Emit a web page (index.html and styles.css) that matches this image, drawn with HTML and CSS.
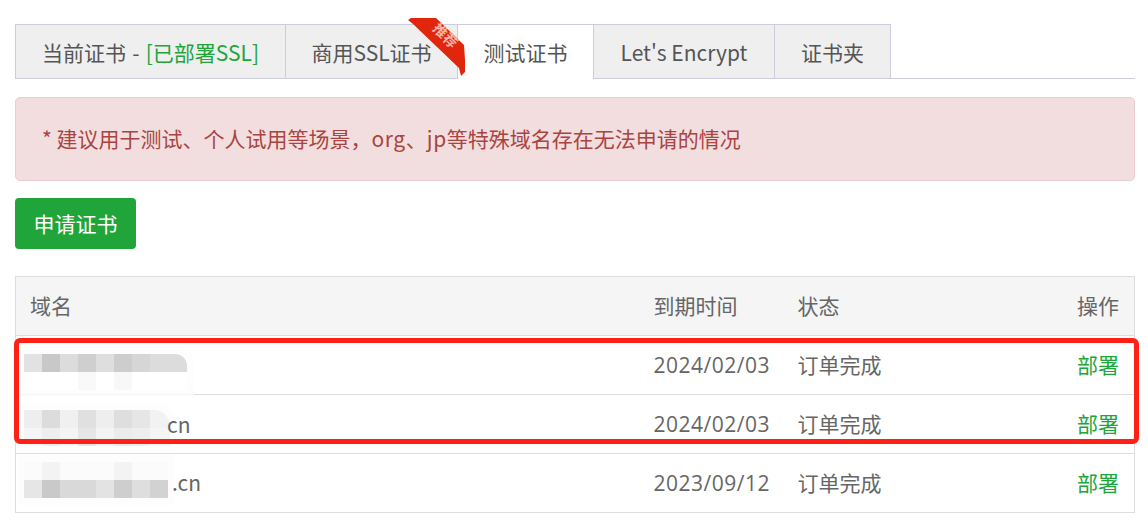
FILE: index.html
```html
<!DOCTYPE html>
<html lang="zh">
<head>
<meta charset="utf-8">
<title>SSL</title>
<link rel="stylesheet" href="styles.css">
</head>
<body>
<div class="page">
  <ul class="tabs">
    <li class="tab tab-current">当前证书 - <span class="ok">[已部署SSL]</span></li>
    <li class="tab tab-ssl">商用SSL证书
      <span class="ribbon"><svg width="62" height="62" viewBox="0 0 62 62"><path class="rib" d="M2 6 L5 4 L30 4 L58 31 L59 46 L59 58 L55 62 L53 54 L7 10 Z"/></svg><b class="ribbon-text">推荐</b></span>
    </li>
    <li class="tab tab-active">测试证书</li>
    <li class="tab tab-le">Let's Encrypt</li>
    <li class="tab tab-folder">证书夹</li>
  </ul>
  <div class="alert"><span class="alert-text">* 建议用于测试、个人试用等场景<span class="tc">，</span><span class="lat">org</span>、<span class="lat">jp</span>等特殊域名存在无法申请的情况</span></div>
  <button class="btn" type="button">申请证书</button>
  <div class="table-wrap">
    <table class="table">
      <thead>
        <tr><th class="c-name">域名</th><th class="c-date">到期时间</th><th class="c-state">状态</th><th class="c-op">操作</th></tr>
      </thead>
      <tbody>
        <tr>
          <td class="c-name"><span class="mosaic m1"></span></td>
          <td class="c-date"><span class="num">2024/02/03</span></td><td class="c-state">订单完成</td><td class="c-op"><a class="deploy">部署</a></td>
        </tr>
        <tr>
          <td class="c-name"><span class="mosaic m2"></span><span class="tld tld2">cn</span></td>
          <td class="c-date"><span class="num">2024/02/03</span></td><td class="c-state">订单完成</td><td class="c-op"><a class="deploy">部署</a></td>
        </tr>
        <tr>
          <td class="c-name"><span class="mosaic m3"></span><span class="tld tld3">.cn</span></td>
          <td class="c-date"><span class="num">2023/09/12</span></td><td class="c-state">订单完成</td><td class="c-op"><a class="deploy">部署</a></td>
        </tr>
      </tbody>
    </table>
    <div class="mark"></div>
  </div>
</div>
</body>
</html>
```
FILE: styles.css
```css
* { box-sizing: border-box; }
html, body { margin: 0; padding: 0; background: #fff; }
body { font-family: "Noto Sans CJK SC", "Open Sans", sans-serif; color: #555; overflow: hidden; }
.page { width: 1135px; height: 528px; padding: 24px 0 0 15px; }

.tabs { display: flex; list-style: none; margin: 0; padding: 0; height: 55px; border-bottom: 1px solid #ccccdd; }
.tab { height: 55px; position: relative; font-size: 21px; line-height: 55px; text-align: center; white-space: nowrap;
  background: #efeff0; border: 1px solid #ccccdd; border-left: 0; color: #555; }
.tab-current { width: 271px; border-left: 1px solid #ccccdd; word-spacing: 1.5px; }
.tab-ssl { width: 172px; z-index: 2; }
.tab-active { width: 135px; background: #fff; border: 0; border-top: 1px solid #ccccdd; }
.tab-le { width: 182px; border-left: 1px solid #ccccdd; }
.tab-folder { width: 116px; }
.ok { color: #20a53a; }

.ribbon { position: absolute; right: -11px; top: -11px; width: 62px; height: 62px; line-height: 1; }
.ribbon svg { display: block; }
.rib { fill: #e0260d; }
.ribbon-text { position: absolute; left: 24px; top: 14px; width: 32px; text-align: center; font-size: 14px; font-weight: 700; line-height: 14px; color: #f6b5aa; transform: rotate(45deg); }

.alert { height: 84px; margin-top: 18px; padding: 0 26px 3px; font-size: 21px; color: #a94442; display: flex; align-items: center;
  background: #f2dede; border: 1px solid #ebccd1; border-radius: 5px; }
.tc { font-family: "Noto Sans CJK TC", sans-serif; }
.lat { letter-spacing: 0.6px; }

.btn { display: block; width: 121px; height: 51px; margin: 17px 0 0; padding: 0; border: 0; border-radius: 4px; background: #20a53a; color: #fff;
  font: inherit; font-size: 21px; line-height: 51px; text-align: center; }

.table-wrap { position: relative; margin-top: 27px; }
.table { width: 1120px; border-collapse: collapse; table-layout: fixed; font-size: 21px; color: #666; }
.table th, .table td { height: 59px; padding: 0 15px 2px; border: 1px solid #ddd; border-left: 0; border-right: 0; font-weight: 400; text-align: left; line-height: 28px; white-space: nowrap; }
.table th:first-child, .table td:first-child { border-left: 1px solid #ddd; }
.table th:last-child, .table td:last-child { border-right: 1px solid #ddd; }
.table th:first-child { padding-left: 14px; }
.table thead tr { background: #f5f5f5; }
.c-name { width: 623px; position: relative; }
.c-date { width: 144px; }
.c-state { width: 200px; }
.table .c-op { text-align: right; }
.deploy { color: #20a53a; }
.num { font-family: "Open Sans", sans-serif; letter-spacing: 0.5px; }
.tld { position: absolute; top: 14px; }
.tld2 { left: 151px; top: 15px; }
.tld3 { left: 156px; top: 14px; }

.mosaic { position: absolute; display: block; height: 36px; width: 163px; left: 8px; top: 18px; border-radius: 0 12px 0 0; box-shadow: 0 0 0 7px rgba(252,252,252,.75); }
.m1 { background:
  linear-gradient(90deg, #e2e2e2 0 18px, #c8c8c8 18px 36px, #dcdcdc 36px 54px, #cfcfcf 54px 72px, #dedede 72px 90px, #cdcdcd 90px 108px, #d6d6d6 108px 126px, #dcdcdc 126px 163px) top / 100% 18px no-repeat,
  linear-gradient(90deg, #fff 0 54px, #f9f9f9 54px 72px, #fff 72px 90px, #f8f8f8 90px 108px, #fff 108px) bottom / 100% 18px no-repeat; }
.m2 { width: 146px; top: 15px; border-radius: 0 16px 0 0; background:
  linear-gradient(90deg, #eee 0 18px, #dcdcdc 18px 36px, #f0f0f0 36px 54px, #e0e0e0 54px 72px, #eee 72px 90px, #dedede 90px 108px, #e6e6e6 108px 126px, #f2f2f2 126px 146px) top / 100% 18px no-repeat,
  linear-gradient(90deg, #f5f5f5 0 18px, #eee 18px 36px, #f4f4f4 36px 54px, #e6e6e6 54px 72px, #f3f3f3 72px 90px, #ebebeb 90px 108px, #eee 108px 126px, #f5f5f5 126px 146px) bottom / 100% 18px no-repeat; }
.m3 { width: 144px; top: 8px; border-radius: 0; background:
  linear-gradient(90deg, #fbfbfb 0 18px, #f3f3f3 18px 36px, #fbfbfb 36px 90px, #f3f3f3 90px 108px, #fbfbfb 108px) top / 100% 18px no-repeat,
  linear-gradient(90deg, #e6e6e6 0 18px, #c9c9c9 18px 36px, #d9d9d9 36px 72px, #e3e3e3 72px 90px, #cecece 90px 108px, #dedede 108px 126px, #d2d2d2 126px 144px) bottom / 100% 18px no-repeat; }

.mark { position: absolute; left: -1px; top: 62px; width: 1125px; height: 106px; border: 5px solid #ff2116; border-radius: 6px; pointer-events: none; }
```
